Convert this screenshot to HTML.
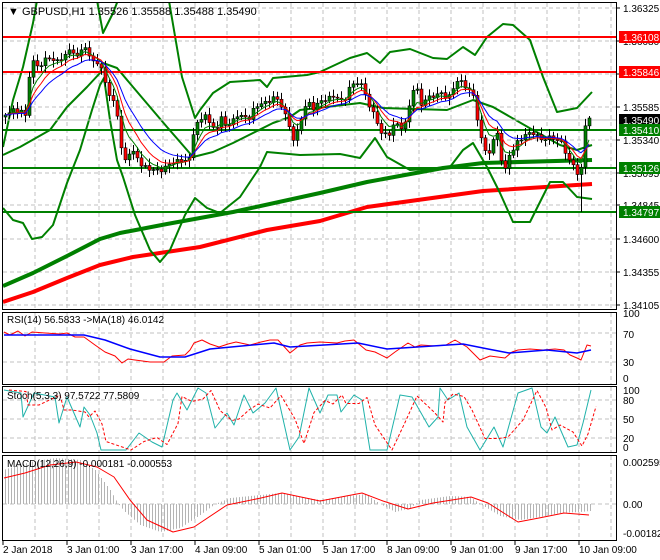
<!DOCTYPE html>
<html><head><meta charset="utf-8">
<style>
html,body{margin:0;padding:0;background:#fff;width:660px;height:560px;overflow:hidden}
svg{display:block;font-family:"Liberation Sans",sans-serif;font-size:10px}
</style></head><body>
<svg id="s" width="660" height="560" xmlns="http://www.w3.org/2000/svg">
<defs>
<clipPath id="cm"><rect x="3" y="3" width="613" height="306"/></clipPath>
<clipPath id="cr"><rect x="3" y="313" width="613" height="71"/></clipPath>
<clipPath id="cs"><rect x="3" y="387" width="613" height="65"/></clipPath>
<clipPath id="cd"><rect x="3" y="456" width="613" height="84"/></clipPath>
</defs>
<g id="grid" stroke="#c0c0c0" stroke-dasharray="4,3" stroke-width="1"></g>
<g id="main" clip-path="url(#cm)"></g>
<g id="rsi" clip-path="url(#cr)"></g>
<g id="sto" clip-path="url(#cs)"></g>
<g id="mac" clip-path="url(#cd)"></g>
<g fill="none" stroke="#000" stroke-width="1">
<rect x="2.5" y="2.5" width="614" height="307"/>
<rect x="2.5" y="312.5" width="614" height="72"/>
<rect x="2.5" y="386.5" width="614" height="66"/>
<rect x="2.5" y="455.5" width="614" height="85"/>
</g>
<g id="axis" fill="#000"></g>
<text x="8" y="15" font-size="11">▼ GBPUSD,H1  1.35526 1.35588 1.35488 1.35490</text>
<text x="7" y="323">RSI(14) 56.5833  -&gt;MA(18) 46.0142</text>
<text x="7" y="399">Stoch(5,3,3) 97.5722 77.5809</text>
<text x="7" y="467">MACD(12,26,9) -0.000181 -0.000553</text>
</svg>
<script>
const NS="http://www.w3.org/2000/svg";
function el(p,t,a){const e=document.createElementNS(NS,t);for(const k in a)e.setAttribute(k,a[k]);document.getElementById(p).appendChild(e);return e;}
function interp(P,x){if(x<=P[0][0])return P[0][1];for(let i=1;i<P.length;i++){if(x<=P[i][0]){const a=P[i-1],b=P[i];return a[1]+(b[1]-a[1])*(x-a[0])/(b[0]-a[0]);}}return P[P.length-1][1];}
function pl(g,P,st,w,extra){const a={points:P.map(p=>p[0]+','+p[1]).join(' '),fill:'none',stroke:st,'stroke-width':w,'stroke-linejoin':'round'};if(extra)Object.assign(a,extra);return el(g,'polyline',a);}
for(let x=35;x<616;x+=32){el('grid','line',{x1:x,y1:3,x2:x,y2:309});el('grid','line',{x1:x,y1:313,x2:x,y2:384});el('grid','line',{x1:x,y1:387,x2:x,y2:452});el('grid','line',{x1:x,y1:456,x2:x,y2:540});}
const py=[8,41,74,107,140,173,205,239,272,305];
py.forEach(y=>el('grid','line',{x1:3,y1:y,x2:616,y2:y}));
[333,362].forEach(y=>el('grid','line',{x1:3,y1:y,x2:616,y2:y}));
[400,419,438].forEach(y=>el('grid','line',{x1:3,y1:y,x2:616,y2:y}));
el('grid','line',{x1:3,y1:504,x2:616,y2:504});
const up=[[3,147],[13,100],[23,67],[33,23],[38,-5],[96,-5],[103,33],[113,13],[120,-5],[168,-5],[182,77],[195,118],[200,110],[213,93],[230,82],[260,80],[267,87],[273,78],[307,75],[320,72],[350,58],[367,53],[380,63],[390,52],[410,49],[433,58],[447,59],[463,47],[475,55],[487,37],[503,24],[513,25],[530,40],[543,77],[557,112],[577,108],[592,92]];
const mid=[[3,155],[20,147],[50,130],[67,107],[87,87],[100,73],[103,63],[117,68],[133,87],[150,107],[167,127],[187,150],[193,157],[213,152],[233,143],[253,133],[273,123],[290,117],[300,110],[360,103],[383,108],[447,110],[473,100],[493,107],[533,130],[560,145],[577,150],[592,145]];
const lo=[[3,208],[13,220],[23,223],[32,239],[42,237],[53,225],[67,183],[80,150],[92,110],[100,85],[104,78],[110,120],[117,160],[123,177],[135,215],[150,250],[160,262],[170,250],[185,215],[195,198],[207,208],[220,213],[240,197],[260,167],[267,152],[300,155],[340,154],[360,158],[375,138],[387,157],[410,170],[450,167],[463,150],[473,143],[487,167],[500,193],[513,222],[530,222],[550,182],[563,182],[577,197],[592,199]];
pl('main',[[3,286],[33,273],[67,256],[100,239],[120,233],[167,224],[233,212],[320,193],[367,182],[443,168],[483,163],[592,160]],'#008000',4);
pl('main',[[3,302],[33,292],[67,278],[100,265],[133,257],[200,247],[267,230],[320,221],[367,207],[483,191],[592,184]],'#ff0000',4);
pl('main',up,'#008000',2);pl('main',mid,'#008000',2);pl('main',lo,'#008000',2);
[[37,'#ff0000'],[72,'#ff0000'],[130,'#008000'],[168,'#008000'],[212,'#008000']].forEach(l=>el('main','line',{x1:3,y1:l[0],x2:616,y2:l[0],stroke:l[1],'stroke-width':2}));
el('main','line',{x1:3,y1:120,x2:616,y2:120,stroke:'#c0c0c0','stroke-width':1});
const P=[[3,117],[8,112],[12,110],[17,112],[20,108],[25,117],[28,80],[32,62],[35,60],[38,70],[43,60],[50,58],[58,62],[67,52],[72,50],[77,57],[83,47],[87,45],[88,57],[97,63],[100,67],[103,75],[107,87],[110,100],[115,103],[118,120],[120,140],[123,167],[127,153],[132,152],[137,157],[140,165],[147,168],[153,170],[163,170],[167,165],[173,162],[183,160],[188,160],[192,157],[193,133],[197,123],[200,122],[205,113],[210,127],[217,127],[220,117],[227,127],[233,120],[237,115],[243,117],[250,118],[253,110],[260,103],[267,103],[273,97],[280,103],[287,120],[292,137],[295,143],[298,127],[302,115],[307,100],[312,110],[315,105],[320,102],[327,98],[333,97],[340,97],[343,110],[347,87],[352,87],[355,82],[360,82],[367,100],[370,108],[375,117],[380,132],[383,133],[388,137],[392,125],[397,125],[400,128],[405,123],[410,102],[415,80],[420,107],[423,100],[428,98],[435,95],[440,93],[447,98],[452,93],[455,80],[460,80],[463,87],[467,87],[472,93],[475,105],[478,125],[482,143],[487,157],[492,143],[497,133],[500,157],[505,170],[508,155],[513,150],[518,140],[523,137],[528,133],[533,133],[538,137],[542,140],[547,138],[552,137],[555,140],[563,143],[567,160],[572,163],[577,173],[580,187],[583,133],[587,117],[592,118]];
let prev=interp(P,1),closes=[],xs=[];
for(let i=0;;i++){const x=5+4*i;if(x>592)break;let c=interp(P,x)+Math.sin(i*2.3)*1.8;closes.push(c);xs.push(x);
 const o=prev;const t=Math.min(o,c),b=Math.max(o,c);let hi=t-2-Math.abs(Math.sin(i*1.7))*5,lw=b+2+Math.abs(Math.cos(i*1.3))*5;
 if(x===581)lw=212;
 el('main','line',{x1:x+.5,y1:hi,x2:x+.5,y2:lw,stroke:'#000','stroke-width':1});
 el('main','rect',{x:x-1,y:t,width:3,height:Math.max(1,b-t),fill:c<o?'#008000':'#ff0000',stroke:'#000','stroke-width':.6});
 prev=c;}
function ema(a,n){const k=2/(n+1);let r=[],v=a[0];for(const q of a){v=q*k+v*(1-k);r.push(v);}return r;}
[[5,'#008000'],[8,'#ff0000'],[13,'#0000ff']].forEach(m=>{const e=ema(closes,m[0]);pl('main',xs.map((x,i)=>[x,e[i]]),m[1],1);});
pl('rsi',[[4,332],[10,335],[18,331],[25,336],[32,332],[45,333],[60,334],[67,333],[75,337],[84,337],[95,345],[105,352],[115,356],[122,363],[128,359],[135,360],[150,362],[164,362],[172,356],[185,355],[190,350],[194,343],[202,340],[210,344],[219,347],[228,344],[236,342],[250,345],[261,342],[270,340],[278,340],[290,353],[300,345],[307,343],[320,342],[337,343],[345,341],[354,340],[360,345],[366,350],[375,352],[387,358],[395,352],[408,343],[415,347],[421,345],[435,346],[446,345],[455,340],[467,347],[475,355],[480,360],[490,356],[505,358],[512,352],[518,350],[530,349],[543,350],[555,349],[564,350],[570,355],[577,358],[581,360],[587,345],[591,346]],'#ff0000',1);
pl('rsi',[[4,335],[84,335],[105,340],[130,349],[160,357],[185,357],[210,349],[274,343],[290,347],[358,343],[387,349],[463,344],[488,349],[509,353],[547,350],[577,353],[591,350]],'#0000ff',1.5);
const S=[[4,390],[21,393],[23,417],[34,393],[55,397],[59,423],[67,397],[80,427],[84,407],[90,415],[97,433],[101,450],[126,450],[139,433],[152,442],[162,447],[173,400],[177,393],[187,410],[198,388],[206,393],[215,428],[227,413],[234,425],[244,395],[253,413],[265,403],[276,388],[290,450],[299,437],[309,388],[320,413],[328,395],[337,395],[341,412],[354,395],[362,400],[370,450],[387,450],[400,395],[412,397],[429,427],[438,417],[440,388],[448,400],[459,393],[467,427],[480,450],[494,427],[503,447],[518,393],[532,388],[541,427],[547,433],[555,417],[568,447],[577,445],[583,423],[591,390]];
pl('sto',S,'#20b2aa',1);
pl('sto',S.map((p,i)=>[p[0]+5,i>0?(p[1]+S[i-1][1])/2:p[1]]),'#ff0000',1,{'stroke-dasharray':'3,2'});
const H=[[3,470],[30,462],[55,458],[80,460],[95,470],[110,490],[118,504],[125,512],[140,525],[160,532],[180,528],[200,515],[215,504],[230,498],[260,495],[280,493],[300,497],[320,500],[340,497],[365,494],[380,504],[395,512],[410,508],[420,500],[450,496],[470,497],[480,504],[500,516],[520,520],[540,517],[560,513],[580,512],[590,511]];
for(let x=5;x<=590;x+=3){el('mac','line',{x1:x+.5,y1:504,x2:x+.5,y2:interp(H,x),stroke:'#b4b4b4','stroke-width':1});}
pl('mac',[[4,478],[25,473],[50,465],[76,462],[97,467],[114,477],[130,500],[147,520],[173,532],[194,527],[227,505],[261,498],[282,493],[320,501],[362,493],[383,501],[408,509],[433,503],[471,497],[488,503],[518,522],[539,518],[564,513],[589,515]],'#ff0000',1);
const pl2=['1.36325','1.36080','1.35835','1.35585','1.35340','1.35095','1.34845','1.34600','1.34355','1.34105'];
py.forEach((y,i)=>{el('axis','line',{x1:617,y1:y,x2:620,y2:y,stroke:'#000'});const t=el('axis','text',{x:623,y:y+4});t.textContent=pl2[i];});
[[37,'1.36108','#ff0000'],[72,'1.35846','#ff0000'],[120,'1.35490','#000'],[130,'1.35410','#008000'],[168,'1.35126','#008000'],[212,'1.34797','#008000']].forEach(b=>{el('axis','rect',{x:619,y:b[0]-6,width:41,height:12,fill:b[2]});const t=el('axis','text',{x:623,y:b[0]+4,fill:'#fff'});t.textContent=b[1];});
[[317,'100'],[338,'70'],[366,'30'],[382,'0'],[394,'100'],[404,'80'],[423,'50'],[442,'20'],[451,'0'],[466,'0.002595'],[508,'0.00'],[537,'-0.001828']].forEach(a=>{const t=el('axis','text',{x:623,y:a[0]});t.textContent=a[1];});
const dl=['2 Jan 2018','3 Jan 01:00','3 Jan 17:00','4 Jan 09:00','5 Jan 01:00','5 Jan 17:00','8 Jan 09:00','9 Jan 01:00','9 Jan 17:00','10 Jan 09:00'];
dl.forEach((d,i)=>{const x=3+64*i;el('axis','line',{x1:x,y1:541,x2:x,y2:545,stroke:'#000'});const t=el('axis','text',{x:x,y:553});t.textContent=d;});
</script>
</body></html>
